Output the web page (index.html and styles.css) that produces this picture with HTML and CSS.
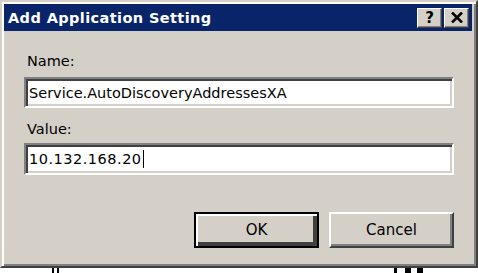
FILE: index.html
```html
<!DOCTYPE html>
<html>
<head>
<meta http-equiv="Content-Type" content="text/html; charset=utf-8"/>
<title>Add Application Setting</title>
<link rel="stylesheet" href="styles.css">
</head>
<body>
<div class="window">
  <div class="titlebar">
    <span class="title">Add Application Setting</span>
    <div class="caption-buttons">
      <span class="cap-btn help">?</span>
      <span class="cap-btn close">
        <svg width="12" height="11" viewBox="0 0 12 11"><path d="M1 0.5 L11 10.5 M11 0.5 L1 10.5" stroke="#000" stroke-width="2.6" fill="none"/></svg>
      </span>
    </div>
  </div>

  <div class="content">
    <div class="label label-name">Name:</div>
    <div class="field field-name">Service.AutoDiscoveryAddressesXA</div>
    <div class="label label-value">Value:</div>
    <div class="field field-value">10.132.168.20<span class="caret"></span></div>

    <div class="buttons">
      <span class="button default">OK</span>
      <span class="button">Cancel</span>
    </div>
  </div>
</div>
<div class="below">
  <span class="mark m1"></span><span class="mark m2"></span>
  <span class="mark m3"></span><span class="mark m4"></span><span class="mark m5"></span>
</div>
</body>
</html>
```

FILE: styles.css
```css
body {
  margin: 0;
  background-color: white;
  font-family: "DejaVu Sans", Verdana, sans-serif;
  font-size: 14px;
  color: #000;
}

.window {
  width: 478px;
  height: 268px;
  box-sizing: border-box;
  background-color: #d4d0c8;
  border: 2px solid;
  border-color: #d4d0c8 #404040 #404040 #d4d0c8;
  box-shadow: inset 2px 2px #ffffff, inset -2px -2px #808080;
  padding: 2px 4px 2px 2px;
}

/* title bar */
.titlebar {
  height: 27px;
  background-color: #0a246a;
  display: flex;
  align-items: center;
  justify-content: space-between;
  padding: 0 3px 0 4px;
}

.title {
  color: white;
  font-weight: bold;
  font-size: 14.5px;
  letter-spacing: 0.4px;
}

.caption-buttons {
  display: flex;
  gap: 2px;
}

.cap-btn {
  width: 25px;
  height: 20px;
  box-sizing: border-box;
  background-color: #d4d0c8;
  border: 1px solid;
  border-color: #ffffff #404040 #404040 #ffffff;
  box-shadow: inset -1px -1px #808080;
  display: flex;
  align-items: center;
  justify-content: center;
  font-weight: bold;
  font-size: 15px;
}

/* form */
.content {
  padding: 20px 18px 0 20px;
}

.label {
  height: 20px;
  line-height: 20px;
  padding-left: 3px;
  font-size: 14.5px;
}

.field {
  height: 31px;
  box-sizing: border-box;
  background-color: white;
  border: 2px solid;
  border-color: #808080 #ffffff #ffffff #808080;
  box-shadow: inset 2px 2px #404040, inset -2px -2px #d4d0c8;
  padding: 0 0 0 3px;
  display: flex;
  align-items: center;
  font-size: 14.5px;
}

.field-name {
  margin-top: 6px;
}

.label-value {
  margin-top: 11px;
}

.field-value {
  margin-top: 4px;
  height: 32px;
  letter-spacing: 0.5px;
}

.caret {
  display: inline-block;
  width: 1px;
  height: 18px;
  margin-left: 1px;
  background-color: #000;
}

.buttons {
  display: flex;
  justify-content: flex-end;
  gap: 10px;
  margin-top: 37px;
}

.button {
  width: 125px;
  height: 36px;
  box-sizing: border-box;
  background-color: #d4d0c8;
  border: 2px solid;
  border-color: #ffffff #404040 #404040 #ffffff;
  box-shadow: inset -2px -2px #808080;
  display: flex;
  align-items: center;
  justify-content: center;
  font-size: 15px;
}

.button.default {
  outline: 2px solid #000;
  outline-offset: -2px;
  box-shadow: inset 2px 2px #ffffff, inset -4px -4px #404040;
}

/* bits of the window behind the dialog */
.below {
  height: 5px;
  display: flex;
  align-items: flex-start;
}

.mark {
  display: inline-block;
  height: 5px;
  background-color: #000;
}

.m1 { width: 2px; margin-left: 52px; }
.m2 { width: 2px; margin-left: 3px; }
.m3 { width: 3px; margin-left: 335px; }
.m4 { width: 6px; margin-left: 8px; }
.m5 { width: 6px; margin-left: 6px; }
```
